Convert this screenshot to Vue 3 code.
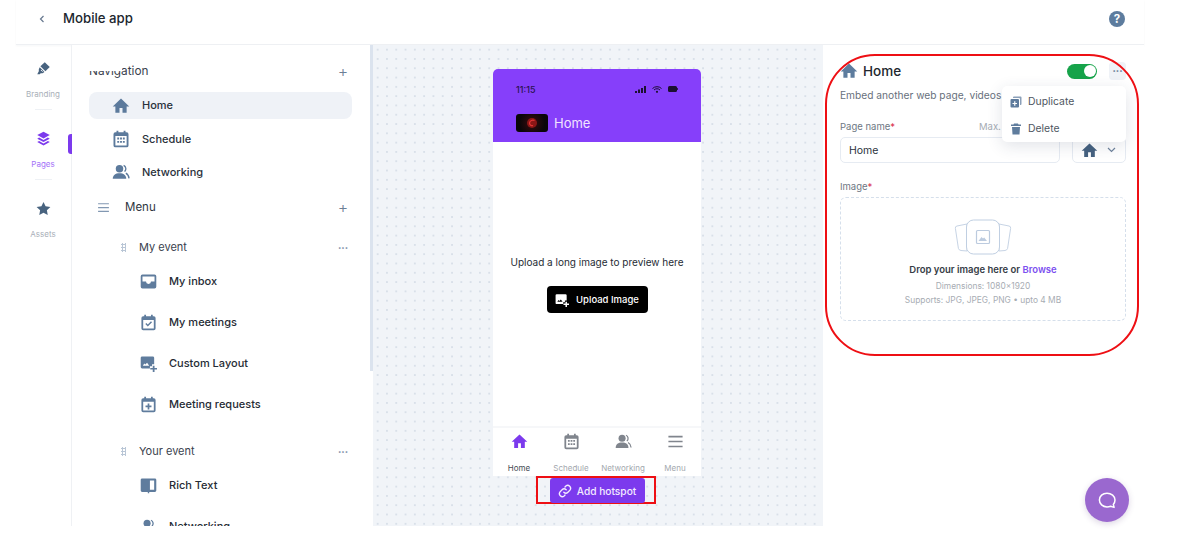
<script setup>
const topItems = [
  { icon: 'home', label: 'Home', active: true },
  { icon: 'cal', label: 'Schedule' },
  { icon: 'people', label: 'Networking' },
]
const groups = [
  { title: 'My event', items: [
    { icon: 'inbox', label: 'My inbox' },
    { icon: 'calcheck', label: 'My meetings' },
    { icon: 'imgplus', label: 'Custom Layout' },
    { icon: 'calplus', label: 'Meeting requests' },
  ] },
  { title: 'Your event', items: [
    { icon: 'book', label: 'Rich Text' },
    { icon: 'people', label: 'Networking' },
  ] },
]
const rail = [
  { icon: 'pen', label: 'Branding' },
  { icon: 'layers', label: 'Pages', active: true },
  { icon: 'star', label: 'Assets' },
]
const tabs = [
  { icon: 'home', label: 'Home', active: true },
  { icon: 'cal', label: 'Schedule' },
  { icon: 'people', label: 'Networking' },
  { icon: 'menu', label: 'Menu' },
]
</script>

<template>
  <div class="page">
    <svg class="sprite" width="0" height="0" aria-hidden="true">
      <symbol id="home" viewBox="0 0 24 24"><path d="M10 21v-6.5h4V21h5.500v-8.500H23L12 2 1 12.500h3.500V21z" fill="currentColor"/></symbol>
      <symbol id="cal" viewBox="0 0 24 24"><path fill-rule="evenodd" d="M6 1h2.500v2h7V1H18v2h1.500A2.500 2.500 0 0 1 22 5.500v15a2.500 2.500 0 0 1-2.500 2.500h-15A2.500 2.500 0 0 1 2 20.500v-15A2.500 2.500 0 0 1 4.500 3H6zM4.500 8v12.500h15V8zM7 10h2.500v2.500H7zm3.750 0h2.500v2.500h-2.500zM14.500 10H17v2.500h-2.500zM7 14.500h2.500V17H7zm3.750 0h2.500V17h-2.500zm3.750 0H17V17h-2.500z" fill="currentColor"/></symbol>
      <symbol id="people" viewBox="0 0 24 24"><circle cx="10" cy="7.500" r="5" fill="currentColor"/><path d="M1 21c0-5 3.500-7.500 9-7.500s9 2.500 9 7.500z" fill="currentColor"/><path d="M15.500 3.200a5 5 0 0 1 1.300 8.300M18.500 13.500c2.500 1.500 4 4 4.200 7" fill="none" stroke="currentColor" stroke-width="1.800"/></symbol>
      <symbol id="inbox" viewBox="0 0 24 24"><path fill-rule="evenodd" d="M3.500 2h17A2.500 2.500 0 0 1 23 4.500v15a2.500 2.500 0 0 1-2.500 2.500h-17A2.500 2.500 0 0 1 1 19.500v-15A2.500 2.500 0 0 1 3.500 2zM3.500 5v7h5a3.500 3.500 0 0 0 7 0h5V5z" fill="currentColor"/></symbol>
      <symbol id="calcheck" viewBox="0 0 24 24"><path fill-rule="evenodd" d="M6 1h2.500v2h7V1H18v2h1.500A2.500 2.500 0 0 1 22 5.500v15a2.500 2.500 0 0 1-2.500 2.500h-15A2.500 2.500 0 0 1 2 20.500v-15A2.500 2.500 0 0 1 4.500 3H6zM4.500 8.500v12h15v-12zm3 5.700 1.500-1.500 2 2 4.500-4.500 1.500 1.500-6 6z" fill="currentColor"/></symbol>
      <symbol id="calplus" viewBox="0 0 24 24"><path fill-rule="evenodd" d="M6 1h2.500v2h7V1H18v2h1.500A2.500 2.500 0 0 1 22 5.500v15a2.500 2.500 0 0 1-2.500 2.500h-15A2.500 2.500 0 0 1 2 20.500v-15A2.500 2.500 0 0 1 4.500 3H6zM4.500 8v12.500h15V8zm6.300 2.500h2.400v3h3v2.400h-3v3h-2.400v-3h-3v-2.400h3z" fill="currentColor"/></symbol>
      <symbol id="imgplus" viewBox="0 0 24 24"><path d="M3 2h15a2 2 0 0 1 2 2v9h-3v3h-3v3H3a2 2 0 0 1-2-2V4a2 2 0 0 1 2-2zm1 13h9l-3-4-2.500 2.500L6 12z" fill-rule="evenodd" fill="currentColor"/><path d="M18 15h2.500v3.200H24v2.300h-3.500V24H18v-3.500h-3.500v-2.300H18z" fill="currentColor"/></symbol>
      <symbol id="book" viewBox="0 0 24 24"><path fill-rule="evenodd" d="M3 2h18a2 2 0 0 1 2 2v15a2 2 0 0 1-2 2h-8v2h-2v-2H3a2 2 0 0 1-2-2V4a2 2 0 0 1 2-2zm11 3v13h6V5z" fill="currentColor"/></symbol>
      <symbol id="pen" viewBox="0 0 24 24"><path d="M14 2l8 7.500-7 7-8-8z" fill="currentColor"/><path d="M6 10l7.500 7.500-3 2H7.500L6 21H2l2.500-4.500V13z" fill="currentColor"/><path d="M8 14.500l2.500 2.500" stroke="#fff" stroke-width="1.500"/></symbol>
      <symbol id="layers" viewBox="0 0 24 24"><path d="M12 1l10 5.500L12 12 2 6.500z" fill="currentColor"/><path d="M5 10.500l7 4 7-4 3 1.700-10 5.500-10-5.500z" fill="currentColor"/><path d="M5 16l7 4 7-4 3 1.700L12 23 2 17.700z" fill="currentColor"/></symbol>
      <symbol id="star" viewBox="0 0 24 24"><path d="M12 1.500l3.300 7 7.700 1-5.600 5.300 1.400 7.700-6.800-3.800-6.800 3.800 1.400-7.700L1 9.500l7.700-1z" fill="currentColor"/></symbol>
      <symbol id="menu" viewBox="0 0 24 24"><path d="M2 4h20v2.200H2zm0 7h20v2.200H2zm0 7h20v2.200H2z" fill="currentColor"/></symbol>
    </svg>

    <div class="app">
      <header class="topbar">
        <svg class="back" viewBox="0 0 8 10"><path d="M5.500 2 2.500 5l3 3" fill="none" stroke="currentColor" stroke-width="1.200"/></svg>
        <h1>Mobile app</h1>
        <span class="help">?</span>
      </header>

      <div class="workspace">
        <nav class="rail">
          <div v-for="(r, i) in rail" :key="r.label" class="rail-item" :class="{ active: r.active }">
            <svg class="rail-icon"><use :href="'#' + r.icon" /></svg>
            <span>{{ r.label }}</span>
            <i v-if="i < 2" class="rail-sep"></i>
            <b v-if="r.active" class="rail-mark"></b>
          </div>
        </nav>

        <aside class="sidebar">
          <div class="side-mask"></div>
          <div class="sec-head">
            <span>Navigation</span><em class="plus">+</em>
          </div>
          <div v-for="t in topItems" :key="t.label" class="top-row" :class="{ active: t.active }">
            <svg class="row-icon"><use :href="'#' + t.icon" /></svg>
            <span>{{ t.label }}</span>
          </div>
          <div class="sec-head menu-head">
            <svg class="menu-icon"><use href="#menu" /></svg>
            <span>Menu</span><em class="plus">+</em>
          </div>
          <section v-for="g in groups" :key="g.title" class="group">
            <div class="group-head">
              <i class="grip"></i>
              <span>{{ g.title }}</span>
              <em class="more">•••</em>
            </div>
            <div v-for="it in g.items" :key="it.label" class="sub-row">
              <svg class="sub-icon"><use :href="'#' + it.icon" /></svg>
              <span>{{ it.label }}</span>
            </div>
          </section>
        </aside>

        <main class="canvas">
          <div class="phone">
            <div class="phone-top">
              <div class="status">
                <span>11:15</span>
                <div class="status-icons">
                  <svg width="11" height="7" viewBox="0 0 11 7"><path d="M0 5h2v2H0zm3-1.500h2V7H3zM6 2h2v5H6zm3-2h2v7H9z" fill="#1c1030"/></svg>
                  <svg width="10" height="7" viewBox="0 0 10 7"><path d="M.5 2.500a6.500 6.500 0 0 1 9 0M2 4a4.200 4.200 0 0 1 6 0" fill="none" stroke="#1c1030" stroke-width="1"/><circle cx="5" cy="5.800" r="1.100" fill="#1c1030"/></svg>
                  <svg width="10" height="6" viewBox="0 0 10 6"><rect width="9" height="6" y="0" rx="1.500" fill="#1c1030"/><rect x="9.200" y="2" width=".8" height="2" fill="#1c1030"/></svg>
                </div>
              </div>
              <div class="app-bar">
                <div class="logo"><svg width="12" height="12" viewBox="0 0 12 12"><circle cx="6" cy="6" r="5" fill="#8c1616"/><path d="M8.500 3.500A3.500 3.500 0 0 0 3.500 6c0 2 2 3 3.500 2.500" fill="none" stroke="#e23434" stroke-width="1.300"/></svg></div>
                <span>Home</span>
              </div>
            </div>
            <div class="phone-body">
              <p>Upload a long image to preview here</p>
              <button class="upload" type="button">
                <svg width="14" height="14"><use href="#imgplus" /></svg>
                Upload Image
              </button>
            </div>
            <div class="tabbar">
              <div v-for="t in tabs" :key="t.label" class="tab" :class="{ active: t.active }">
                <svg class="tab-icon"><use :href="'#' + t.icon" /></svg>
                <span>{{ t.label }}</span>
              </div>
            </div>
          </div>
          <button class="hotspot" type="button">
            <svg width="14" height="14" viewBox="0 0 24 24" fill="none" stroke="currentColor" stroke-width="2.400" stroke-linecap="round"><path d="M10 14a5 5 0 0 0 7 0l3.500-3.500a5 5 0 0 0-7-7L12 5"/><path d="M14 10a5 5 0 0 0-7 0l-3.500 3.500a5 5 0 0 0 7 7L12 19"/></svg>
            Add hotspot
          </button>
        </main>

        <section class="panel">
          <div class="panel-head">
            <svg class="panel-home"><use href="#home" /></svg>
            <h2>Home</h2>
            <span class="toggle"><i></i></span>
            <span class="kebab">•••</span>
          </div>
          <p class="desc">Embed another web page, videos</p>

          <div class="label-row"><label>Page name<b>*</b></label><small>Max.</small></div>
          <div class="fields">
            <div class="input">Home</div>
            <div class="picker">
              <svg class="picker-home"><use href="#home" /></svg>
              <svg width="9" height="6" viewBox="0 0 9 6"><path d="M1 1l3.500 3.500L8 1" fill="none" stroke="currentColor" stroke-width="1.200"/></svg>
            </div>
          </div>

          <label class="img-label">Image<b>*</b></label>
          <div class="drop">
            <svg class="illus" width="58" height="38" viewBox="0 0 58 38">
              <path d="M13 5 3 7a2 2 0 0 0-1.600 2.400l3 20A3 3 0 0 0 7 31.500l6 .5zM45 5l10 2a2 2 0 0 1 1.600 2.400l-3 20A3 3 0 0 1 51 31.500l-6 .5z" fill="#fff" stroke="#c7d4e5" stroke-width="1"/>
              <rect x="12.500" y="1" width="33" height="34" rx="7" fill="#fff" stroke="#c0cfe2" stroke-width="1"/>
              <rect x="22.500" y="11.500" width="13" height="13" rx="1" fill="#fff" stroke="#bccbdf" stroke-width="1.200"/>
              <path d="M24.500 22l3-4 1.500 1.500 1.200-1 2.800 3.500z" fill="#bccbdf"/>
            </svg>
            <p class="drop-title">Drop your image here or <a>Browse</a></p>
            <p class="drop-note">Dimensions: 1080×1920</p>
            <p class="drop-note">Supports: JPG, JPEG, PNG • upto 4 MB</p>
          </div>

          <div class="popover">
            <div class="pop-row">
              <svg width="12" height="12" viewBox="0 0 24 24"><path d="M8 1h13a2 2 0 0 1 2 2v13a2 2 0 0 1-2 2h-1V6a2 2 0 0 0-2-2H6V3a2 2 0 0 1 2-2z" fill="#8ba0b9"/><path fill-rule="evenodd" d="M3 6h13a2 2 0 0 1 2 2v13a2 2 0 0 1-2 2H3a2 2 0 0 1-2-2V8a2 2 0 0 1 2-2zm5.300 4.500v3.300H5v2.400h3.300v3.300h2.400v-3.300H14v-2.400h-3.300v-3.300z" fill="currentColor"/></svg>
              <span>Duplicate</span>
            </div>
            <div class="pop-row">
              <svg width="12" height="12" viewBox="0 0 24 24"><path d="M8 1h8l1 2h5v3H2V3h5zM4 8h16l-1 15H5z" fill="currentColor"/></svg>
              <span>Delete</span>
            </div>
          </div>
        </section>
      </div>
    </div>

    <div class="note-round"></div>
    <div class="note-rect"></div>
    <div class="fab">
      <svg width="19" height="17" viewBox="0 0 19 17"><path d="M9 1.200c4.300 0 8 2.900 8 6.800 0 1.900-.7 3.300-1.700 4.400l.8 3-3.500-1.100c-1.100.4-2.300.6-3.600.6-4.300 0-7.600-3-7.600-6.900S4.700 1.200 9 1.200z" fill="none" stroke="#fff" stroke-width="1.500" stroke-linejoin="round"/></svg>
    </div>
  </div>
</template>

<style>
html, body { margin: 0; background: #fff; }
</style>

<style scoped>
.page {
  position: relative;
  width: 1177px;
  height: 536px;
  overflow: hidden;
  background: #fff;
  padding: 0 33px 10px 16px;
  box-sizing: border-box;
  font-family: Inter, "Noto Sans", sans-serif;
  color: #1f2733;
}
.sprite { position: absolute; }
p, h1, h2 { margin: 0; }
em { font-style: normal; }
svg { display: block; }

.app { display: flex; flex-direction: column; height: 100%; }
.topbar {
  flex: 0 0 45px;
  box-sizing: border-box;
  display: flex;
  align-items: center;
  padding: 0 19px 6px 22px;
  border-bottom: 1px solid #eef0f3;
  box-shadow: 0 1px 2px rgba(30, 50, 80, .04);
}
.back { width: 8px; height: 10px; color: #66788f; margin-right: 17px; }
.topbar h1 { font-size: 13.200px; font-weight: 500; color: #20262e; flex: 1; line-height: 1; }
.help {
  width: 16px; height: 16px; border-radius: 50%;
  background: #5d7c9e; color: #fff;
  font: 700 11.500px/16px Inter, sans-serif; text-align: center;
}

.workspace { flex: 1; display: flex; min-height: 0; }

.rail {
  flex: 0 0 56px;
  box-sizing: border-box;
  border-right: 1px solid #eff1f4;
  padding-top: 15px;
  display: flex;
  flex-direction: column;
}
.rail-item {
  position: relative;
  height: 70px;
  display: flex;
  flex-direction: column;
  align-items: center;
  font-size: 8px;
  color: #a9afb8;
  padding-right: 1px;
}
.rail-item span { margin-top: 12px; line-height: 12px; }
.rail-item.active { color: #a472f8; }
.rail-item.active .rail-icon { color: #7c3aed; }
.rail-icon { width: 15px; height: 15px; color: #48637f; margin-top: 1px; }
.rail-sep { position: absolute; top: 49px; left: 19px; width: 17px; height: 1px; background: #eef1f5; }
.rail-mark {
  position: absolute; right: -1px; top: 4px;
  z-index: 2;
  width: 4px; height: 20px; border-radius: 3px 0 0 3px; background: #7c3aed;
}

.sidebar {
  position: relative;
  flex: 0 0 301px;
  box-sizing: border-box;
  padding: 15px 21px 0 17px;
  overflow: hidden;
  background: #fff;
}
.sidebar::after {
  content: "";
  position: absolute;
  right: 0; top: 0;
  width: 3px; height: 326px;
  background: #dbe3ee;
}
.side-mask { position: absolute; left: 0; top: 0; width: 50px; height: 26px; background: #fff; z-index: 1; }
.sec-head {
  height: 22px;
  display: flex;
  align-items: center;
  font-size: 11.800px;
  color: #3a424e;
  margin-bottom: 10px;
}
.sec-head span { flex: 1; }
.plus { font-size: 16px; font-weight: 300; color: #6c7f96; width: 20px; text-align: center; margin-right: -1px; }
.top-row {
  height: 27px;
  margin-bottom: 6px;
  border-radius: 8px;
  display: flex;
  align-items: center;
  font-size: 11px;
  font-weight: 500;
  color: #2a313b;
  padding-left: 23px;
}
.top-row.active { background: #eff2f7; }
.top-row.active span { position: relative; top: -1px; }
.row-icon { width: 18px; height: 18px; color: #5c7a9c; margin-right: 12px; }
.menu-head { margin-top: 11px; margin-bottom: 18px; font-size: 11.500px; color: #2f3640; }
.menu-icon { width: 13px; height: 13px; color: #8298b2; margin: 0 15px 0 8px; }
.group { margin-bottom: 15.500px; }
.group-head {
  height: 22px;
  margin-bottom: 2.500px;
  display: flex;
  align-items: center;
  font-size: 11px;
  color: #3a424e;
  padding-left: 32px;
}
.group-head span { flex: 1; }
.grip {
  width: 5px; height: 9px; margin-right: 13px;
  background-image: radial-gradient(circle, #b9c6d6 1px, transparent 1.100px);
  background-size: 3px 3px;
}
.more { font-size: 6px; color: #7b8ea8; width: 20px; text-align: center; margin-right: -1px; }
.sub-row {
  height: 41px;
  display: flex;
  align-items: center;
  font-size: 11px;
  font-weight: 500;
  color: #252b34;
  padding-left: 51px;
}
.sub-icon { width: 17px; height: 17px; color: #5f7c9d; margin-right: 12px; }

.canvas {
  flex: 0 0 450px;
  box-sizing: border-box;
  display: flex;
  flex-direction: column;
  align-items: center;
  padding: 24px 2px 0 0;
  background-color: #f1f4f8;
  background-image: radial-gradient(circle, #d9e0e9 .8px, transparent 1px);
  background-size: 9.300px 9.300px;
}
.phone {
  width: 208px;
  height: 407px;
  background: #fff;
  display: flex;
  flex-direction: column;
  border-radius: 5px 5px 0 0;
  overflow: hidden;
  flex-shrink: 0;
}
.phone-top { height: 73px; background: #863ffa; padding: 0 23px; box-sizing: border-box; }
.status {
  display: flex; justify-content: space-between; align-items: center;
  height: 12px; margin-top: 14px;
  font-size: 9px; font-weight: 500; color: #2a1350;
}
.status-icons { display: flex; gap: 6px; align-items: center; }
.app-bar { display: flex; align-items: center; gap: 6px; margin-top: 19px; font-size: 13px; color: #f1e4ff; }
.logo {
  width: 32px; height: 18px; border-radius: 3px;
  background: radial-gradient(circle, #3a0d10 0, #0a0608 70%);
  display: flex; align-items: center; justify-content: center;
}
.phone-body {
  flex: 1;
  display: flex;
  flex-direction: column;
  align-items: center;
  padding-top: 112px;
  font-size: 10px;
  color: #262c35;
  border-bottom: 2px solid #f6f7f9;
}
.phone-body p { line-height: 16px; }
.upload {
  margin-top: 16px;
  width: 101px; height: 27px;
  background: #000; color: #fff;
  border: 0; border-radius: 4px;
  display: flex; align-items: center; justify-content: center; gap: 7px;
  font: 500 9.500px Inter, sans-serif;
  padding: 0;
}
.tabbar { height: 48px; display: grid; grid-template-columns: repeat(4, 1fr); flex-shrink: 0; }
.tab {
  display: flex; flex-direction: column; align-items: center;
  font-size: 8px; color: #a3a8ae;
  padding-top: 5px;
}
.tab span { margin-top: 12px; line-height: 12px; }
.tab.active { color: #454b55; }
.tab-icon { width: 17px; height: 17px; color: #80858d; }
.tab.active .tab-icon { color: #7c3aed; }

.hotspot {
  margin-top: 2px;
  width: 95px; height: 25px;
  background: #7c3aed; color: #f3ebff;
  border: 0; border-radius: 3px;
  display: flex; align-items: center; justify-content: center; gap: 5px;
  font: 500 10.200px Inter, sans-serif;
  padding: 0;
  position: relative;
  z-index: 1;
}

.panel {
  position: relative;
  flex: 1;
  box-sizing: border-box;
  background: #fff;
  padding: 16px 18px 0 17px;
}
.panel-head { display: flex; align-items: center; height: 20px; }
.panel-home { width: 18px; height: 18px; color: #5d7c9e; margin-right: 5px; }
.panel-head h2 { flex: 1; font-size: 13.500px; font-weight: 500; color: #22272e; }
.toggle {
  width: 30px; height: 15px; border-radius: 8px; background: #16a34a;
  display: flex; justify-content: flex-end; align-items: center; padding-right: 1px; box-sizing: border-box;
  margin-right: 12px;
}
.toggle i { width: 12px; height: 12px; border-radius: 50%; background: #fff; }
.kebab {
  width: 17px; height: 18px; border-radius: 4px; background: #eff2f7;
  font-size: 6px; line-height: 18px; text-align: center; color: #6a7e98;
}
.desc { margin-top: 6px; font-size: 10.200px; line-height: 16px; color: #67707c; white-space: nowrap; }
.label-row { display: flex; margin-top: 15px; height: 16px; align-items: center; width: 220px; justify-content: space-between; }
label { font-size: 9.500px; color: #6e7783; }
label b { color: #d9304f; font-weight: 400; }
.label-row small { font-size: 9.500px; color: #a5abb3; white-space: nowrap; width: 81px; }
.fields { display: flex; gap: 12px; margin-top: 3px; }
.input {
  flex: 0 0 220px; height: 26px; box-sizing: border-box;
  border: 1px solid #e6ebf2; border-radius: 5px;
  padding-left: 8px; font-size: 10.500px; line-height: 26px; color: #2a313b;
}
.picker {
  flex: 1; height: 26px; box-sizing: border-box;
  border: 1px solid #e6ebf2; border-radius: 5px;
  display: flex; align-items: center; justify-content: center; gap: 9px;
  color: #6f839c;
  padding-right: 2px;
}
.picker-home { width: 17px; height: 17px; color: #45617f; }
.img-label { display: block; margin-top: 17px; line-height: 14px; }
.drop {
  margin-top: 3px;
  height: 124px;
  box-sizing: border-box;
  border: 1px dashed #d5dfeb;
  border-radius: 6px;
  display: flex; flex-direction: column; align-items: center;
  padding-top: 21px;
}
.drop-title { margin-top: 5px; margin-bottom: 1px; font-size: 9.500px; font-weight: 600; line-height: 16px; color: #363c46; }
.drop-title a { color: #7c4ff0; }
.drop-note { font-size: 8.400px; line-height: 14px; color: #a7acb3; }
.popover {
  position: absolute;
  left: 179px; top: 41px;
  width: 124px; height: 56px;
  background: #fff;
  border-radius: 5px;
  box-shadow: 0 4px 16px rgba(40, 60, 90, .14);
  padding-top: 2px;
  box-sizing: border-box;
}
.pop-row {
  height: 27px; display: flex; align-items: center; gap: 6px;
  padding-left: 8px;
  font-size: 10.400px; color: #4e5661;
}
.pop-row svg { color: #5f7c9d; }

.note-round {
  position: absolute; left: 825px; top: 54px;
  width: 314px; height: 302px;
  box-sizing: border-box;
  border: 2px solid #ee0f14;
  border-radius: 50px;
  pointer-events: none;
}
.note-rect {
  position: absolute; left: 536px; top: 476px;
  width: 120px; height: 28px;
  box-sizing: border-box;
  border: 2px solid #ee0f14;
  pointer-events: none;
}
.fab {
  position: absolute; left: 1085px; top: 478px;
  width: 44px; height: 44px; border-radius: 50%;
  background: #9a68cf;
  box-shadow: 0 2px 6px rgba(80, 50, 120, .2);
  display: flex; align-items: center; justify-content: center;
}
</style>
